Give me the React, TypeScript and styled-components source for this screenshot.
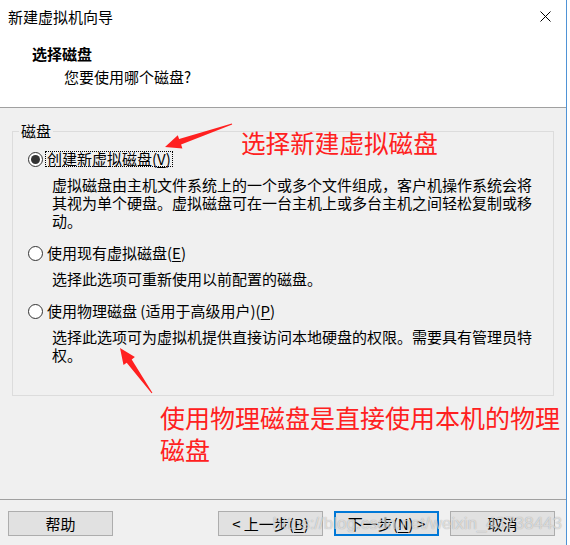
import React from "react";
import styled, { createGlobalStyle, css } from "styled-components";

const FONT = `"Noto Sans CJK SC", "Noto Sans", sans-serif`;

const GlobalStyle = createGlobalStyle`
  html, body { margin: 0; padding: 0; background: #ffffff; }
  body { font-family: ${FONT}; color: #000; }
  * { box-sizing: border-box; }
`;

const Window = styled.div`
  position: relative;
  width: 567px;
  height: 545px;
  display: flex;
  flex-direction: column;
  background: #f0f0f0;
  border-right: 1px solid #4f93d6;
  font-family: ${FONT};
  font-size: 15px;
`;

const Header = styled.header`
  height: 108px;
  background: #ffffff;
  border-bottom: 1px solid #a0a0a0;
  display: flex;
  flex-direction: column;
`;

const TitleBar = styled.div`
  height: 33px;
  display: flex;
  align-items: center;
  justify-content: space-between;
  padding: 0 15px 0 8px;
`;

const Title = styled.div`
  font-size: 15px;
  line-height: 20px;
  margin-top: 1px;
`;

const CloseButton = styled.div`
  width: 11px;
  height: 11px;
  display: flex;
`;

const Heading = styled.div`
  padding: 11px 0 0 32px;
`;

const HeadingTitle = styled.div`
  font-weight: bold;
  font-size: 15px;
  line-height: 20px;
`;

const HeadingSub = styled.div`
  margin: 3px 0 0 32px;
  font-size: 15px;
  line-height: 20px;
`;

const Body = styled.main`
  flex: 1;
  display: flex;
  flex-direction: column;
  padding: 13px 12px 0 12px;
`;

const GroupBox = styled.fieldset`
  margin: 0;
  padding: 9px 0 31px 0;
  min-width: 0;
  border: 1px solid #dcdcdc;
`;

const Legend = styled.legend`
  margin-left: 6px;
  padding: 0 2px;
  font-size: 15px;
  line-height: 20px;
`;

const OptionList = styled.div`
  display: flex;
  flex-direction: column;
  gap: 14px;
  padding-left: 15px;
`;

const Option = styled.div`
  display: flex;
  flex-direction: column;
`;

const OptionRow = styled.div`
  display: flex;
  align-items: center;
  height: 18px;
  gap: 2px;
`;

const Radio = styled.span<{ $checked?: boolean }>`
  width: 15px;
  height: 15px;
  border-radius: 50%;
  border: 1px solid #333333;
  background: #ffffff;
  display: flex;
  align-items: center;
  justify-content: center;
  flex-shrink: 0;
  ${(p) =>
    p.$checked &&
    css`
      &::after {
        content: "";
        width: 9px;
        height: 9px;
        border-radius: 50%;
        background: #333333;
      }
    `}
`;

const OptionLabel = styled.span<{ $focused?: boolean }>`
  font-size: 15px;
  line-height: 14px;
  padding: 0 1px;
  border: 1px dotted ${(p) => (p.$focused ? "#000000" : "transparent")};
  white-space: nowrap;
`;

const Mnemonic = styled.span`
  text-decoration: underline;
  text-underline-offset: 2px;
`;

const Description = styled.p`
  margin: 8px 0 0 24px;
  width: 485px;
  font-size: 15px;
  line-height: 18px;
`;

const RedNote = styled.div`
  margin: 5px 0 0 148px;
  width: 402px;
  color: #ff2020;
  font-size: 25px;
  line-height: 32px;
`;

const TopNote = styled.div`
  position: absolute;
  left: 241px;
  top: 127px;
  color: #ff2020;
  font-size: 24.6px;
  line-height: 30px;
  white-space: nowrap;
`;

const ArrowLayer = styled.svg`
  position: absolute;
  left: 0;
  top: 0;
  pointer-events: none;
`;

const Footer = styled.footer`
  position: relative;
  height: 46px;
  border-top: 1px solid #a0a0a0;
  display: flex;
  justify-content: space-between;
  align-items: flex-start;
  padding: 11px 11px 0 8px;
`;

const ButtonGroup = styled.div`
  display: flex;
  gap: 11px;
`;

const Button = styled.button<{ $primary?: boolean }>`
  width: 105px;
  height: 25px;
  padding: 0;
  background: #e1e1e1;
  border: ${(p) => (p.$primary ? "2px solid #0078d7" : "1px solid #adadad")};
  font-family: ${FONT};
  font-size: 15px;
  line-height: 20px;
  color: #000;
  display: flex;
  align-items: center;
  justify-content: center;
  white-space: pre;
`;

const Watermark = styled.div`
  position: absolute;
  right: 4px;
  top: 14px;
  font-family: "Liberation Sans", Arial, sans-serif;
  font-size: 17px;
  line-height: 20px;
  color: rgba(255, 255, 255, 0.6);
  text-shadow: 0 0 1px rgba(0, 0, 0, 0.35);
  pointer-events: none;
  white-space: nowrap;
`;

export default function App() {
  return (
    <>
      <GlobalStyle />
      <Window>
        <Header>
          <TitleBar>
            <Title>新建虚拟机向导</Title>
            <CloseButton>
              <svg width="11" height="11" viewBox="0 0 11 11">
                <path d="M0.5 0.5 L10.5 10.5 M10.5 0.5 L0.5 10.5" stroke="#000" strokeWidth="1" fill="none" />
              </svg>
            </CloseButton>
          </TitleBar>
          <Heading>
            <HeadingTitle>选择磁盘</HeadingTitle>
            <HeadingSub>您要使用哪个磁盘?</HeadingSub>
          </Heading>
        </Header>

        <Body>
          <GroupBox>
            <Legend>磁盘</Legend>
            <OptionList>
              <Option>
                <OptionRow>
                  <Radio $checked />
                  <OptionLabel $focused>
                    创建新虚拟磁盘(<Mnemonic>V</Mnemonic>)
                  </OptionLabel>
                </OptionRow>
                <Description>
                  虚拟磁盘由主机文件系统上的一个或多个文件组成，客户机操作系统会将其视为单个硬盘。虚拟磁盘可在一台主机上或多台主机之间轻松复制或移动。
                </Description>
              </Option>
              <Option>
                <OptionRow>
                  <Radio />
                  <OptionLabel>
                    使用现有虚拟磁盘(<Mnemonic>E</Mnemonic>)
                  </OptionLabel>
                </OptionRow>
                <Description>选择此选项可重新使用以前配置的磁盘。</Description>
              </Option>
              <Option>
                <OptionRow>
                  <Radio />
                  <OptionLabel>
                    使用物理磁盘 (适用于高级用户)(<Mnemonic>P</Mnemonic>)
                  </OptionLabel>
                </OptionRow>
                <Description>
                  选择此选项可为虚拟机提供直接访问本地硬盘的权限。需要具有管理员特权。
                </Description>
              </Option>
            </OptionList>
          </GroupBox>
          <RedNote>使用物理磁盘是直接使用本机的物理磁盘</RedNote>
        </Body>

        <Footer>
          <Button>帮助</Button>
          <ButtonGroup>
            <Button>
              {"< 上一步("}
              <Mnemonic>B</Mnemonic>
              {")"}
            </Button>
            <Button $primary>
              {"下一步("}
              <Mnemonic>N</Mnemonic>
              {") >"}
            </Button>
            <Button>取消</Button>
          </ButtonGroup>
          <Watermark>https://blog.csdn.net/weixin_43738443</Watermark>
        </Footer>

        <TopNote>选择新建虚拟磁盘</TopNote>
        <ArrowLayer width="567" height="545" viewBox="0 0 567 545">
          <polygon
            points="231.8,123.5 179.1,139.0 177.8,135.2 165,147 182.4,148.4 181.1,144.6 232.2,124.5"
            fill="#ff2020"
          />
          <polygon
            points="152.4,392.7 131.7,359.4 134.9,357.1 120,348 123.5,365.1 126.7,362.8 151.6,393.3"
            fill="#ff2020"
          />
        </ArrowLayer>
      </Window>
    </>
  );
}
